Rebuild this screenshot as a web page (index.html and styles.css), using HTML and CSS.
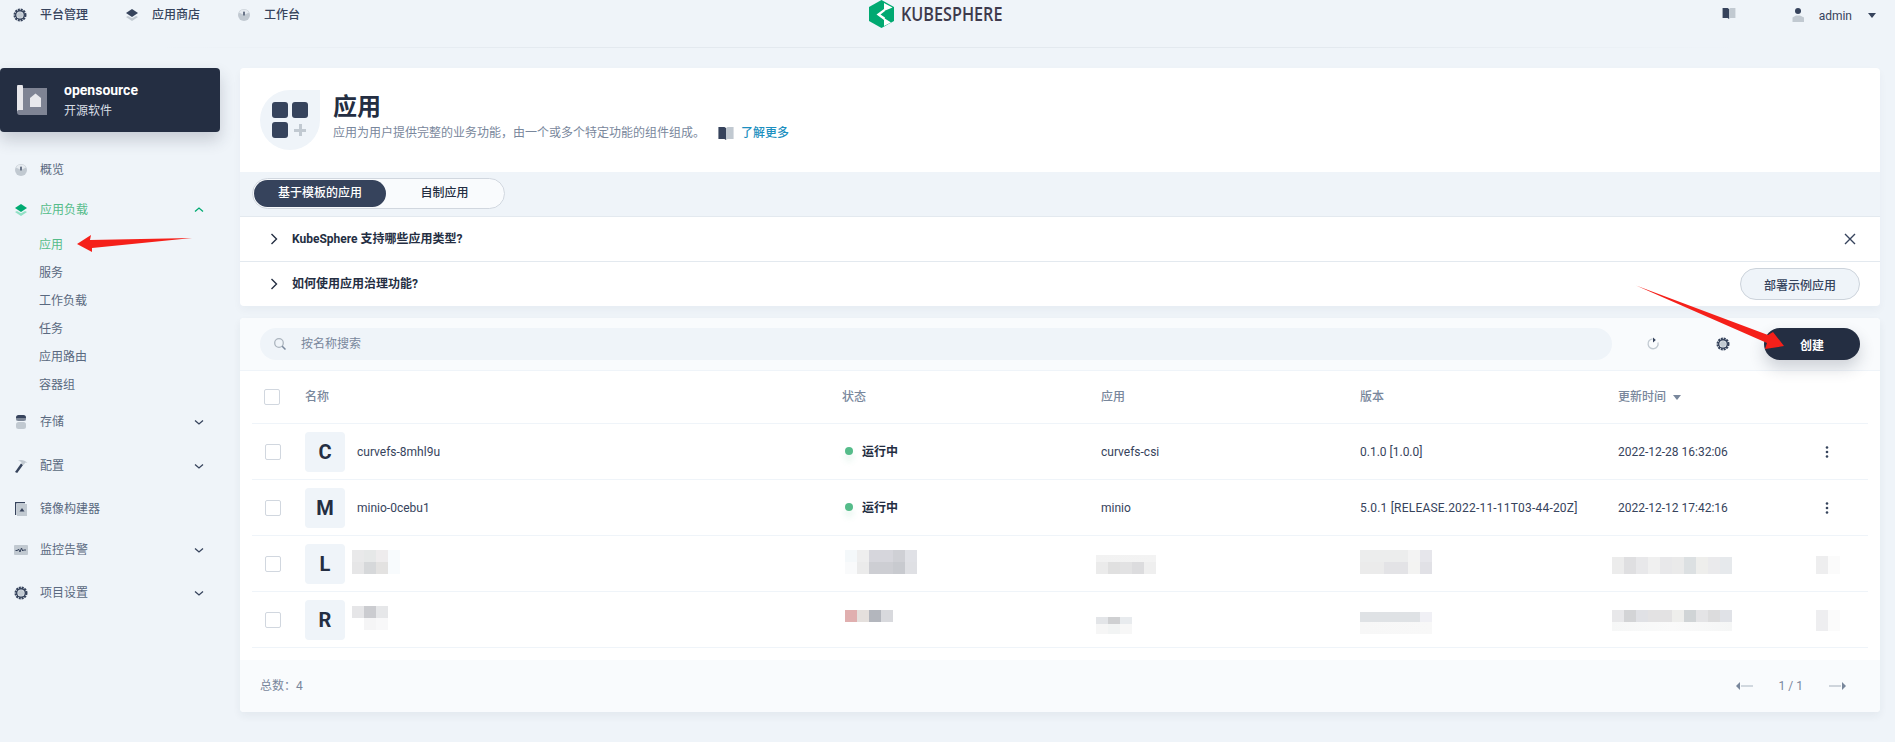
FILE: index.html
```html
<!DOCTYPE html>
<html lang="zh-CN">
<head>
<meta charset="utf-8">
<title>应用 - KubeSphere</title>
<link rel="stylesheet" href="styles.css">
</head>
<body>
<svg class="sprite" width="0" height="0" aria-hidden="true">
  <symbol id="i-gear" viewBox="0 0 14 14">
    <circle cx="7" cy="7" r="5.4" fill="none" stroke="#36435c" stroke-width="2.2" stroke-dasharray="2 .83"/>
    <circle cx="7" cy="7" r="4.3" fill="none" stroke="#36435c" stroke-width="1.4"/>
    <circle cx="7" cy="7" r="3" fill="#c1c9d1"/>
  </symbol>
  <symbol id="i-layers" viewBox="0 0 14 14">
    <path d="M1 9l2-1 4 2.2L11 8l2 1-6 4z" fill="#c1c9d1"/>
    <path d="M7 1l6 4-6 4-6-4z" fill="#36435c"/>
  </symbol>
  <symbol id="i-layers-g" viewBox="0 0 14 14">
    <path d="M1 9l2-1 4 2.2L11 8l2 1-6 4z" fill="#90e0c5"/>
    <path d="M7 1l6 4-6 4-6-4z" fill="#00aa72"/>
  </symbol>
  <symbol id="i-dash" viewBox="0 0 14 14">
    <circle cx="7" cy="7" r="6" fill="#c1c9d1"/>
    <path d="M2 4.5A5.6 5.6 0 0 1 12 4.500L7 7z" fill="#e6ebf0"/>
    <rect x="6.300" y="3.500" width="1.400" height="4" rx=".6" fill="#36435c"/>
  </symbol>
  <symbol id="i-book" viewBox="0 0 14 12">
    <path d="M0 0h5.500l1.500 1v11l-1.500-1H0z" fill="#36435c"/>
    <path d="M7 1l1.500-1H14v11H8.500L7 12z" fill="#c1c9d1"/>
  </symbol>
  <symbol id="i-user" viewBox="0 0 12 14">
    <circle cx="6" cy="3" r="3" fill="#36435c"/>
    <path d="M4 7.500h4l4 2V14H.500V9.500z" fill="#c1c9d1"/>
  </symbol>
  <symbol id="i-disk" viewBox="0 0 12 14">
    <rect x="1" y="0" width="10" height="6" rx="2.500" fill="#36435c"/>
    <rect x="1" y="3" width="10" height="3" fill="#c1c9d1" opacity=".5"/>
    <rect x="1" y="7" width="10" height="7" rx="2.500" fill="#c1c9d1"/>
  </symbol>
  <symbol id="i-hammer" viewBox="0 0 14 14">
    <path d="M7 4.500L9 6 3.200 14 1 13z" fill="#36435c"/>
    <path d="M4 1.500C7 .2 11 1 13.500 4L11.500 3.500 9.500 6 7 4.500 7.500 3z" fill="#c1c9d1"/>
  </symbol>
  <symbol id="i-image" viewBox="0 0 12 14">
    <path d="M0 0h10v1.200H1.200V13H0z" fill="#36435c"/>
    <rect x="2" y="2" width="10" height="12" fill="#c1c9d1"/>
    <path d="M7 6l2.500 3.500h-5z" fill="#36435c"/>
  </symbol>
  <symbol id="i-monitor" viewBox="0 0 14 10">
    <rect width="14" height="10" rx="1" fill="#c1c9d1"/>
    <path d="M1.500 5.500h2l1-1.500 1.500 3 1.500-4 1.200 3 .8-1h2.500" fill="none" stroke="#36435c" stroke-width="1"/>
  </symbol>
  <symbol id="i-down" viewBox="0 0 12 12">
    <path d="M2 4.500L6 8l4-3.500" fill="none" stroke="#36435c" stroke-width="1.300"/>
  </symbol>
  <symbol id="i-up" viewBox="0 0 12 12">
    <path d="M2 7.500L6 4l4 3.500" fill="none" stroke="#00aa72" stroke-width="1.300"/>
  </symbol>
  <symbol id="i-right" viewBox="0 0 12 14">
    <path d="M3.500 2l5 5-5 5" fill="none" stroke="#242e42" stroke-width="1.400"/>
  </symbol>
  <symbol id="i-kebab" viewBox="0 0 16 16">
    <circle cx="8" cy="3.500" r="1.300" fill="#36435c"/>
    <circle cx="8" cy="8" r="1.300" fill="#36435c"/>
    <circle cx="8" cy="12.500" r="1.300" fill="#36435c"/>
  </symbol>
</svg>

<header class="topbar">
  <nav class="topnav">
    <a class="topnav-item"><svg class="ic14"><use href="#i-gear"/></svg>平台管理</a>
    <a class="topnav-item"><svg class="ic14"><use href="#i-layers"/></svg>应用商店</a>
    <a class="topnav-item"><svg class="ic14"><use href="#i-dash"/></svg>工作台</a>
  </nav>
  <div class="logo">
    <svg class="logo-mark" viewBox="0 0 25 28">
      <path d="M12.500 0L25 7v14l-12.500 7L0 21V7z" fill="#00a971"/>
      <path d="M15 9l-7.500 5.500L15 20l1-2.500-4.500-3 4.500-3.500z" fill="#fff"/>
      <path d="M15 3l8.500 4.500L15 11z" fill="#fff"/>
      <path d="M15 18l7 4.500L15 26z" fill="#fff"/>
    </svg>
    <span class="logo-text">KUBESPHERE</span>
  </div>
  <div class="topright">
    <svg class="ic-book"><use href="#i-book"/></svg>
    <svg class="ic-user"><use href="#i-user"/></svg>
    <span class="username">admin</span>
    <span class="caret"></span>
  </div>
</header>
<div class="topline"></div>

<div class="layout">
  <aside class="sidebar">
    <div class="project">
      <svg class="project-icon" viewBox="0 0 30 30">
        <path d="M5 3h25v27H5z" fill="#7f8494"/>
        <path d="M0 2a2.500 2.500 0 0 1 6 0v24H2.500C1 26 0 27 0 28z" fill="#e8e8ec"/>
        <path d="M0 27c0-1.500 1-2 2.500-2H6v5H2.500C1 30 0 29 0 27z" fill="#7f8494"/>
        <path d="M13 22V13l5.500-4.500L24 13v9z" fill="#e8e8ec"/>
      </svg>
      <div class="project-text">
        <strong class="project-name">opensource</strong>
        <span class="project-desc">开源软件</span>
      </div>
    </div>
    <ul class="menu">
      <li class="menu-item first"><svg class="ic14"><use href="#i-dash"/></svg>概览</li>
      <li class="menu-item active"><svg class="ic14"><use href="#i-layers-g"/></svg>应用负载<svg class="chev"><use href="#i-up"/></svg></li>
      <li class="submenu">
        <a class="sub-item current">应用</a>
        <a class="sub-item">服务</a>
        <a class="sub-item">工作负载</a>
        <a class="sub-item">任务</a>
        <a class="sub-item">应用路由</a>
        <a class="sub-item">容器组</a>
      </li>
      <li class="menu-item wide"><svg class="ic14"><use href="#i-disk"/></svg>存储<svg class="chev"><use href="#i-down"/></svg></li>
      <li class="menu-item"><svg class="ic14"><use href="#i-hammer"/></svg>配置<svg class="chev"><use href="#i-down"/></svg></li>
      <li class="menu-item tight"><svg class="ic14"><use href="#i-image"/></svg>镜像构建器</li>
      <li class="menu-item"><svg class="ic14"><use href="#i-monitor"/></svg>监控告警<svg class="chev"><use href="#i-down"/></svg></li>
      <li class="menu-item"><svg class="ic14"><use href="#i-gear"/></svg>项目设置<svg class="chev"><use href="#i-down"/></svg></li>
    </ul>
  </aside>

  <main class="main">
    <section class="banner">
      <div class="banner-head">
        <div class="banner-icon">
          <span class="tile"></span><span class="tile"></span><span class="tile"></span>
          <span class="plus"></span>
        </div>
        <div class="banner-text">
          <h1 class="banner-title">应用</h1>
          <p class="banner-desc">应用为用户提供完整的业务功能，由一个或多个特定功能的组件组成。<svg class="ic-book2"><use href="#i-book"/></svg><a class="more">了解更多</a></p>
        </div>
      </div>
      <div class="tabs-band">
        <div class="tabs">
          <span class="tab on">基于模板的应用</span>
          <span class="tab">自制应用</span>
        </div>
      </div>
      <div class="tip">
        <svg class="tip-arrow"><use href="#i-right"/></svg>
        <span class="tip-text">KubeSphere 支持哪些应用类型?</span>
        <svg class="tip-close" viewBox="0 0 14 14"><path d="M2 2l10 10M12 2L2 12" stroke="#36435c" stroke-width="1.400" fill="none"/></svg>
      </div>
      <div class="tip last">
        <svg class="tip-arrow"><use href="#i-right"/></svg>
        <span class="tip-text">如何使用应用治理功能?</span>
        <button class="btn-ghost">部署示例应用</button>
      </div>
    </section>

    <section class="panel">
      <div class="toolbar">
        <div class="search">
          <svg class="search-icon" viewBox="0 0 14 14"><circle cx="6" cy="6" r="4.300" fill="none" stroke="#abb4be" stroke-width="1.300"/><path d="M9.200 9.200l3.300 3.300" stroke="#79879c" stroke-width="1.500"/></svg>
          <span class="search-ph">按名称搜索</span>
        </div>
        <svg class="tool-refresh" viewBox="0 0 14 14"><path d="M10.500 3.200A5 5 0 1 1 4 2.700" transform="rotate(30 7 7)" fill="none" stroke="#c1c9d1" stroke-width="1.300"/><path d="M7 .5v5L9.800 3z" fill="#36435c"/></svg>
        <svg class="tool-gear"><use href="#i-gear"/></svg>
        <button class="btn-primary">创建</button>
      </div>

      <div class="row head">
        <span class="check-cell"><i class="check up"></i></span>
        <span>名称</span>
        <span>状态</span>
        <span>应用</span>
        <span>版本</span>
        <span class="sort">更新时间<i class="sort-caret"></i></span>
        <span></span>
      </div>

      <div class="row">
        <span class="check-cell"><i class="check"></i></span>
        <span class="name-cell"><b class="avatar">C</b>curvefs-8mhl9u</span>
        <span class="status"><i class="dot"></i>运行中</span>
        <span>curvefs-csi</span>
        <span>0.1.0 [1.0.0]</span>
        <span>2022-12-28 16:32:06</span>
        <span class="act"><svg class="kebab"><use href="#i-kebab"/></svg></span>
      </div>
      <div class="row">
        <span class="check-cell"><i class="check"></i></span>
        <span class="name-cell"><b class="avatar">M</b>minio-0cebu1</span>
        <span class="status"><i class="dot"></i>运行中</span>
        <span>minio</span>
        <span class="ver-long">5.0.1 [RELEASE.2022-11-11T03-44-20Z]</span>
        <span>2022-12-12 17:42:16</span>
        <span class="act"><svg class="kebab"><use href="#i-kebab"/></svg></span>
      </div>
      <div class="row">
        <span class="check-cell"><i class="check"></i></span>
        <span class="name-cell"><b class="avatar">L</b><i class="blur n3"></i></span>
        <i class="blur s3"></i>
        <i class="blur a3"></i>
        <i class="blur v3"></i>
        <i class="blur t3"></i>
        <i class="blur k3"></i>
      </div>
      <div class="row">
        <span class="check-cell"><i class="check"></i></span>
        <span class="name-cell"><b class="avatar">R</b><i class="blur n4"></i></span>
        <i class="blur s4"></i>
        <i class="blur a4"></i>
        <i class="blur v4"></i>
        <i class="blur t4"></i>
        <i class="blur k4"></i>
      </div>

      <footer class="foot">
        <span class="total">总数：4</span>
        <div class="pager">
          <svg class="pg" viewBox="0 0 17 10"><path d="M5 5h12" stroke="#c1c9d1" stroke-width="1.400"/><path d="M4 1v8L0 5z" fill="#79879c"/></svg>
          <span class="pg-num">1 / 1</span>
          <svg class="pg" viewBox="0 0 17 10"><path d="M0 5h12" stroke="#c1c9d1" stroke-width="1.400"/><path d="M13 1v8l4-4z" fill="#79879c"/></svg>
        </div>
      </footer>
    </section>
  </main>
</div>

<svg class="annot" viewBox="0 0 1895 742" aria-hidden="true">
  <path d="M77 244L91 235 90 240 192 238 92 248 92 252z" fill="#f5201a"/>
  <path d="M1636 285.500L1768 335 1773 332 1784 346 1765 349 1767 343z" fill="#f5201a"/>
</svg>
</body>
</html>
```

FILE: styles.css
```css
* { box-sizing: border-box; }
html, body { margin: 0; padding: 0; }
body {
  position: relative;
  width: 1895px;
  height: 742px;
  overflow: hidden;
  background: #eff4f9;
  color: #36435c;
  font: 12px/16px Roboto, "Noto Sans CJK SC", sans-serif;
}
ul { list-style: none; margin: 0; padding: 0; }
h1, p { margin: 0; }
i { display: block; font-style: normal; }
.sprite { position: absolute; }
svg { display: block; flex: none; }
.ic14 { width: 14px; height: 14px; }

/* top bar */
.topbar {
  display: grid;
  grid-template-columns: 869px 1fr auto;
  height: 47px;
}
.topnav { display: flex; padding: 7px 0 0 13px; align-items: flex-start; }
.topnav-item {
  display: flex;
  gap: 13px;
  align-items: center;
  height: 16px;
  font-weight: 500;
  color: #36435c;
}
.topnav-item:nth-child(1) { width: 112px; }
.topnav-item:nth-child(2) { width: 112px; }
.logo { display: flex; gap: 7px; align-items: flex-start; }
.logo-mark { width: 25px; height: 28px; }
.logo-text {
  font: 600 19.500px/28px "Open Sans", sans-serif;
  color: #3e3a4c;
  transform: scaleX(.83);
  transform-origin: left center;
}
.topright { display: flex; align-items: flex-start; padding: 8px 19px 0 0; }
.ic-book { width: 14px; height: 11px; margin-right: 56px; }
.ic-user { width: 12px; height: 14px; margin-right: 15px; }
.username { margin-top: -2px; line-height: 20px; }
.caret {
  width: 0;
  height: 0;
  margin: 5px 0 0 16px;
  border: 4px solid transparent;
  border-top: 5px solid #36435c;
}
.topline {
  height: 1px;
  background: linear-gradient(90deg, transparent 8%, #e3e9ef 30%, #e3e9ef 70%, transparent 92%);
}

/* layout */
.layout { display: flex; gap: 20px; padding-top: 20px; }
.sidebar { width: 220px; flex: none; }
.main { width: 1640px; flex: none; }

/* sidebar */
.project {
  display: flex;
  align-items: center;
  gap: 17px;
  height: 64px;
  padding-left: 17px;
  border-radius: 4px;
  background: #242e42;
  box-shadow: 0 8px 16px rgba(36, 46, 66, .2);
}
.project-icon { width: 30px; height: 30px; }
.project-text { display: flex; flex-direction: column; gap: 5px; }
.project-name { color: #fff; font-size: 14px; font-weight: 700; line-height: 16px; }
.project-desc { color: #d8dee5; }
.menu { padding-top: 20px; }
.menu-item {
  display: flex;
  align-items: center;
  gap: 12px;
  height: 36px;
  margin-bottom: 7px;
  padding-left: 14px;
  color: #5a6980;
  position: relative;
}
.menu-item.first { margin-bottom: 4px; }
.menu-item.active { color: #55bc8a; margin-bottom: 3px; }
.menu-item.wide { margin-bottom: 8px; }
.menu-item.tight { margin-bottom: 5px; }
.chev { width: 12px; height: 12px; margin-left: auto; margin-right: 15px; }
.submenu { display: flex; flex-direction: column; margin-bottom: 5px; }
.sub-item { height: 28px; padding-left: 39px; line-height: 28px; color: #5a6980; }
.sub-item.current { color: #55bc8a; }

/* banner */
.banner {
  height: 238px;
  border-radius: 4px;
  background: #fff;
  box-shadow: 0 4px 8px rgba(36, 46, 66, .04);
  overflow: hidden;
}
.banner-head { display: flex; gap: 13px; height: 104px; padding: 22px 0 0 20px; }
.banner-icon {
  display: grid;
  grid-template: 16px 16px / 16px 16px;
  gap: 4px;
  width: 60px;
  height: 60px;
  padding: 12px;
  border-radius: 50% 0 50% 50%;
  background: #eff4f9;
  position: relative;
}
.tile { border-radius: 3px; background: #36435c; }
.plus {
  width: 12px;
  height: 12px;
  margin: 2px;
  background:
    linear-gradient(#c1c9d1, #c1c9d1) center / 100% 3px no-repeat,
    linear-gradient(#c1c9d1, #c1c9d1) center / 3px 100% no-repeat;
}
.banner-title { margin-top: 1px; font-size: 24px; font-weight: 700; line-height: 32px; color: #242e42; }
.banner-desc { display: flex; align-items: center; margin-top: 2px; color: #79879c; }
.ic-book2 { width: 16px; height: 13px; margin: 0 7px 0 13px; }
.more { color: #1c8fc0; font-weight: 500; }
.tabs-band { height: 45px; padding: 6px 12px 0; border-bottom: 1px solid #e3e9ef; background: #eff4f9; }
.tabs {
  display: flex;
  width: 253px;
  height: 31px;
  padding: 1px;
  border: 1px solid #d1d7df;
  border-radius: 16px;
  background: #f9fbfd;
}
.tab { flex: none; width: 117px; line-height: 27px; text-align: center; color: #242e42; font-weight: 500; }
.tab.on { width: 132px; border-radius: 14px; background: #36435c; color: #fff; }
.tip {
  display: flex;
  align-items: center;
  height: 45px;
  padding: 0 20px 0 28px;
  border-bottom: 1px solid #e3e9ef;
}
.tip.last { height: 44px; border-bottom: 0; }
.tip-arrow { width: 12px; height: 14px; margin-right: 12px; }
.tip-text { font-weight: 700; color: #242e42; }
.tip-close { width: 14px; height: 14px; margin-left: auto; margin-right: 3px; }
.btn-ghost {
  width: 120px;
  height: 32px;
  margin-left: auto;
  padding: 0;
  border: 1px solid #ccd3db;
  border-radius: 16px;
  background: #eff4f9;
  color: #36435c;
  font: 500 12px Roboto, "Noto Sans CJK SC", sans-serif;
}

/* panel */
.panel {
  height: 394px;
  margin-top: 12px;
  border-radius: 4px;
  background: #fff;
  box-shadow: 0 4px 8px rgba(36, 46, 66, .06);
  overflow: hidden;
}
.toolbar {
  display: flex;
  align-items: center;
  height: 53px;
  padding: 0 20px;
  border-bottom: 1px solid #eff4f9;
  background: #f9fbfd;
}
.search {
  display: flex;
  align-items: center;
  width: 1352px;
  height: 32px;
  padding-left: 13px;
  border-radius: 16px;
  background: #eff4f9;
}
.search-icon { width: 14px; height: 14px; margin-right: 14px; }
.search-ph { color: #79879c; }
.tool-refresh { width: 14px; height: 14px; margin-left: 34px; }
.tool-gear { width: 14px; height: 14px; margin-left: 56px; }
.btn-primary {
  width: 96px;
  height: 32px;
  margin-left: 34px;
  padding: 0;
  border: 0;
  border-radius: 16px;
  background: #242e42;
  color: #fff;
  font: 700 12px Roboto, "Noto Sans CJK SC", sans-serif;
  box-shadow: 0 8px 16px rgba(36, 46, 66, .2);
}

/* table */
.row {
  display: grid;
  grid-template-columns: 53px 537px 259px 259px 258px 198px 52px;
  align-items: center;
  height: 56px;
  margin: 0 12px;
  padding: 8px 0 7px;
  border-bottom: 1px solid #eff4f9;
  color: #36435c;
}
.row.head { height: 53px; padding: 0 0 1px; color: #79879c; font-weight: 500; }
.check-cell { padding-left: 13px; }
.check { width: 16px; height: 16px; border: 1px solid #d1d7df; border-radius: 2px; background: #fff; }
.check.up { margin-left: -1px; }
.name-cell { display: flex; align-items: center; gap: 12px; height: 40px; }
.avatar {
  flex: none;
  width: 40px;
  height: 40px;
  border-radius: 4px;
  background: #eff4f9;
  color: #242e42;
  font: 700 20px/40px Roboto, sans-serif;
  text-align: center;
}
.status { display: flex; align-items: center; gap: 9px; padding-left: 3px; font-weight: 700; color: #242e42; }
.dot { width: 8px; height: 8px; margin-top: -3px; border-radius: 50%; background: #55bc8a; box-shadow: 0 6px 6px rgba(85, 188, 138, .15); }
.ver-long { letter-spacing: .2px; }
.sort { display: flex; align-items: center; gap: 7px; }
.sort-caret { width: 0; height: 0; border: 4px solid transparent; border-top: 5px solid #79879c; margin-top: 5px; }
.act { padding-left: 3px; }
.kebab { width: 16px; height: 16px; }

/* pixelated (redacted) cells */
.blur { align-self: start; }
.name-cell .blur { margin-top: 6px; align-self: flex-start; }
.n3 {
  width: 48px; height: 24px; margin-left: -5px;
  background:
    linear-gradient(90deg, #e9e9ea 0 12px, #e6e8e8 12px 24px, #eeeced 24px 36px, #f8fbfd 36px) top / 100% 12px no-repeat,
    linear-gradient(90deg, #e6e6e7 0 12px, #d6d8da 12px 24px, #e3e2e1 24px 36px, #f8fbfd 36px) bottom / 100% 12px no-repeat;
}
.n4 {
  width: 36px; height: 24px; margin-left: -5px;
  background:
    linear-gradient(90deg, #e6e6e8 0 12px, #cbccd0 12px 24px, #e6e7e9 24px) top / 100% 12px no-repeat,
    linear-gradient(90deg, #fff 0 12px, #f5f5f6 12px 24px, #f8f8f9 24px) bottom / 100% 12px no-repeat;
}
.s3 {
  width: 72px; height: 24px; margin: 6px 0 0 3px;
  background:
    linear-gradient(90deg, #f4f8fa 0 12px, #eee 12px 24px, #d6d6dc 24px 48px, #cfd0d5 48px 60px, #e0e1e6 60px) top / 100% 12px no-repeat,
    linear-gradient(90deg, #f9fafb 0 12px, #ebebeb 12px 24px, #cdced3 24px 48px, #c8cacf 48px 60px, #dfe0e4 60px) bottom / 100% 12px no-repeat;
}
.s4 {
  width: 48px; height: 16px; margin: 10px 0 0 3px;
  background: linear-gradient(90deg, #e0afaf 0 12px, #e5e0dd 12px 24px, #b3b6bd 24px 36px, #d8d9dd 36px) top / 100% 12px no-repeat;
}
.a3 {
  width: 60px; height: 19px; margin: 11px 0 0 -5px;
  background:
    linear-gradient(90deg, #f2f2f2, #f3f3f3) top / 100% 7px no-repeat,
    linear-gradient(90deg, #ebebeb 0 12px, #e0e0e0 12px 24px, #e2e2e3 24px 36px, #dcdcde 36px 48px, #efefef 48px) bottom / 100% 12px no-repeat;
}
.a4 {
  width: 36px; height: 17px; margin: 17px 0 0 -5px;
  background:
    linear-gradient(90deg, #e3e5e8 0 12px, #cfd0d2 12px 24px, #e8ebee 24px) top / 100% 7px no-repeat,
    linear-gradient(90deg, #f6f6f6 0 12px, #f2f4f4 12px 24px, #f7f7f7 24px) bottom / 100% 10px no-repeat;
}
.v3 {
  width: 72px; height: 24px; margin-top: 6px;
  background:
    linear-gradient(90deg, #eceded 0 48px, #f3f3f3 48px 60px, #e6e6eb 60px) top / 100% 12px no-repeat,
    linear-gradient(90deg, #ebebeb 0 24px, #e3e3e6 24px 48px, #f3f3f2 48px 60px, #e1e1e6 60px) bottom / 100% 12px no-repeat;
}
.v4 {
  width: 72px; height: 22px; margin-top: 12px;
  background:
    linear-gradient(90deg, #dfe2e5 0 60px, #f0f0f5 60px) top / 100% 10px no-repeat,
    linear-gradient(90deg, #f7f7f7, #f8f8f8) bottom / 100% 12px no-repeat;
}
.t3 {
  width: 120px; height: 17px; margin: 13px 0 0 -6px;
  background:
    linear-gradient(90deg, #ececec 0 12px, #dfdfe1 12px 24px, #e8e8ea 24px 36px, #f0f0f0 36px 48px, #e8e8ea 48px 60px, #eaeaea 60px 72px, #dce0e2 72px 84px, #eeeeec 84px 96px, #eaeaec 96px 108px, #e6e9ec 108px) bottom / 100% 17px no-repeat;
}
.t4 {
  width: 120px; height: 21px; margin: 10px 0 0 -6px;
  background:
    linear-gradient(90deg, #e8e8ea 0 12px, #d3d4d6 12px 24px, #e0e1e5 24px 36px, #e3e2e3 36px 60px, #eeeeec 60px 72px, #d0d4d6 72px 84px, #e4e4e6 84px 96px, #dcdcdd 96px 108px, #e0e2e7 108px) top / 100% 12px no-repeat,
    linear-gradient(90deg, #f6f7f7, #fafafa 50%, #f5f6f6) bottom / 100% 9px no-repeat;
}
.k3 {
  width: 24px; height: 18px; margin-top: 12px;
  background: linear-gradient(90deg, #eeeeef 0 12px, #fbfbfb 12px);
}
.k4 {
  width: 24px; height: 21px; margin-top: 10px;
  background: linear-gradient(90deg, #eeeef0 0 12px, #fbfbfb 12px);
}

/* footer */
.foot {
  display: flex;
  align-items: center;
  justify-content: space-between;
  height: 52px;
  margin-top: 12px;
  padding: 0 34px 0 20px;
  background: #f9fbfd;
  color: #79879c;
}
.pager { display: flex; align-items: center; gap: 26px; }
.pg { width: 17px; height: 10px; }
.pg-num { font-size: 12px; }

/* annotation arrows drawn over the page */
.annot { position: absolute; left: 0; top: 0; width: 1895px; height: 742px; pointer-events: none; }
```
